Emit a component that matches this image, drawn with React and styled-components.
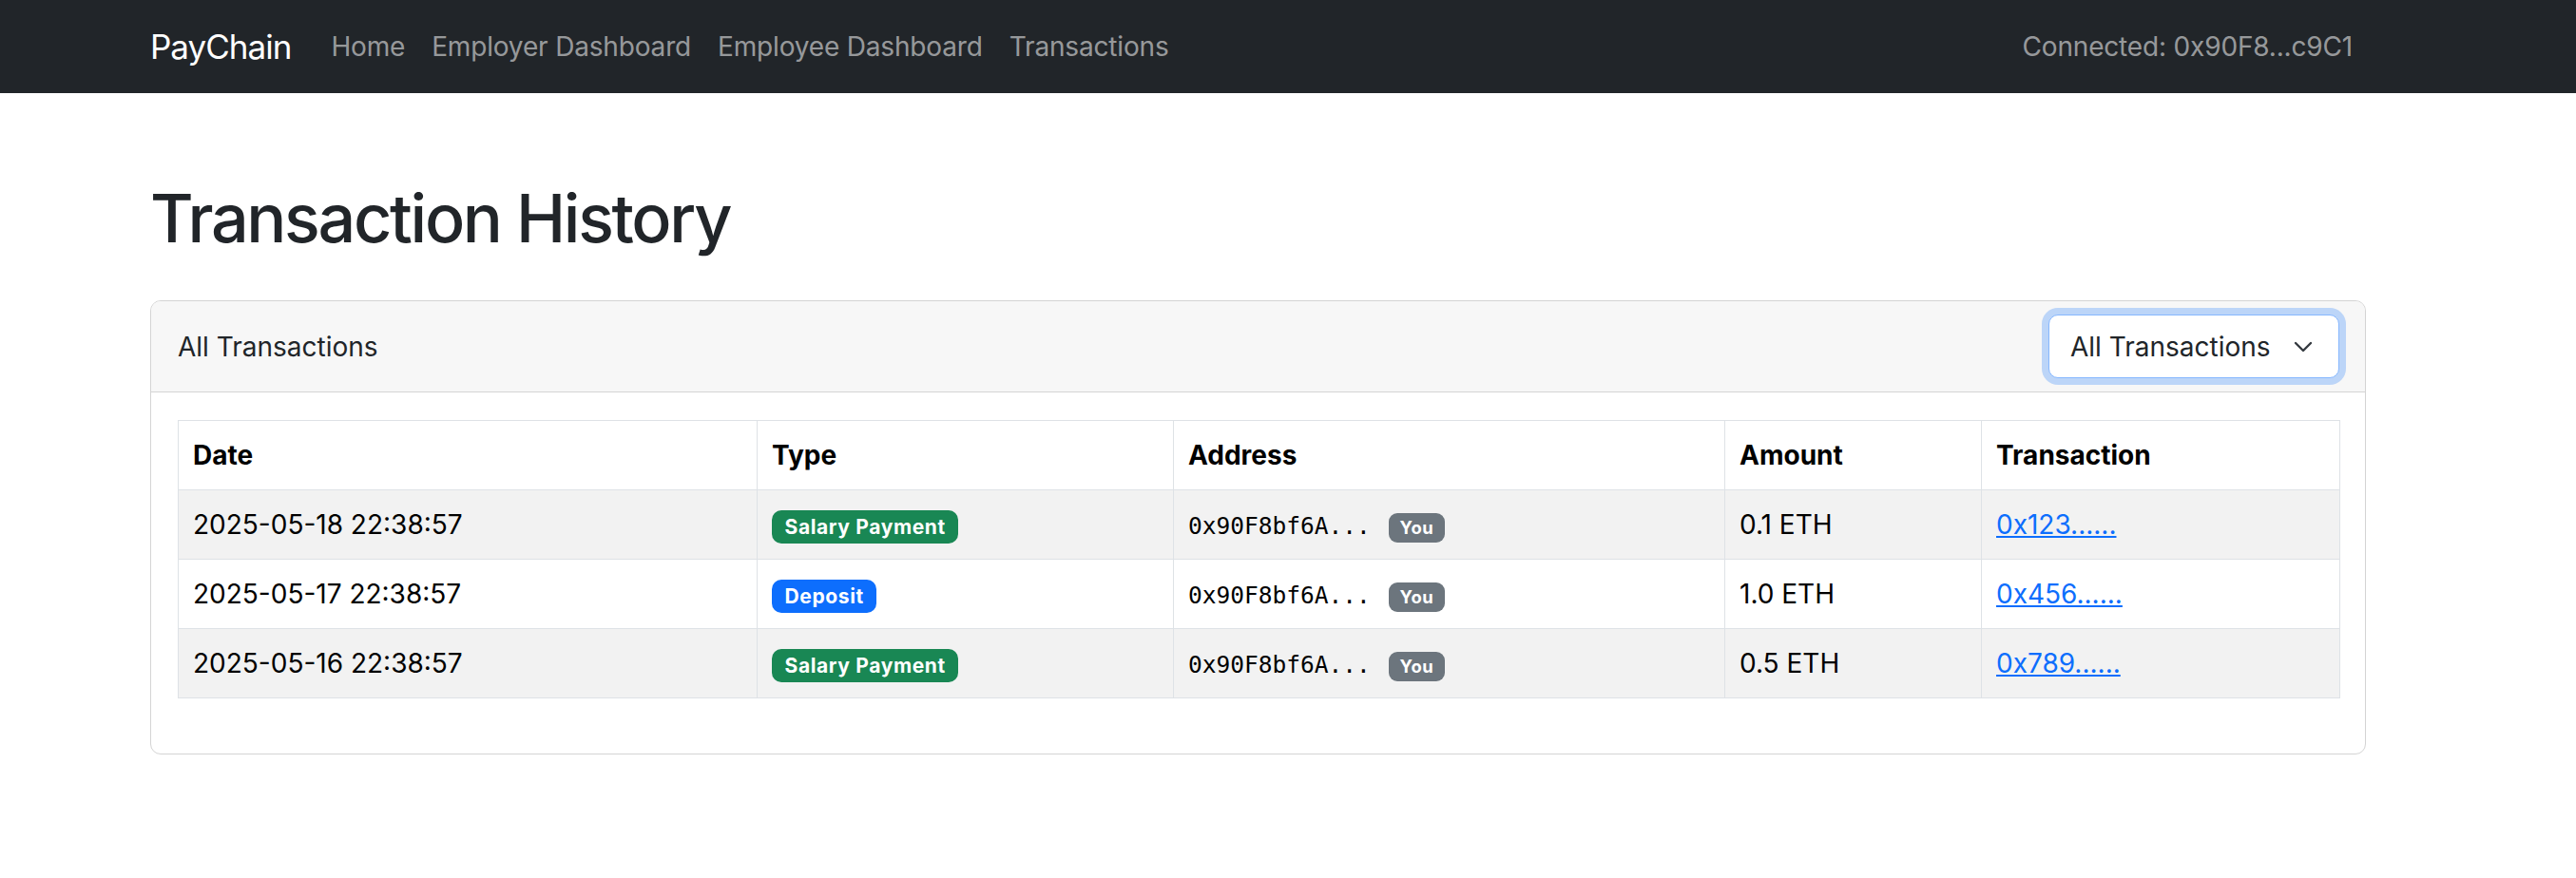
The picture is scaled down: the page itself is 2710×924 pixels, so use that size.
import styled, { createGlobalStyle } from "styled-components";

const GlobalStyle = createGlobalStyle`
  body {
    margin: 0;
    background: #fff;
    font-family: Inter, "Noto Sans", "Liberation Sans", sans-serif;
    font-size: 28px;
    line-height: 1.5;
    color: #212529;
  }
`;

const transactions = [
  { date: "2025-05-18 22:38:57", type: "Salary Payment", address: "0x90F8bf6A...", amount: "0.1 ETH", hash: "0x123......" },
  { date: "2025-05-17 22:38:57", type: "Deposit", address: "0x90F8bf6A...", amount: "1.0 ETH", hash: "0x456......" },
  { date: "2025-05-16 22:38:57", type: "Salary Payment", address: "0x90F8bf6A...", amount: "0.5 ETH", hash: "0x789......" },
];

const columns = [
  { label: "Date", width: 609 },
  { label: "Type", width: 438 },
  { label: "Address", width: 580 },
  { label: "Amount", width: 270 },
  { label: "Transaction", width: 377 },
];

const App = () => {
  return (
    <>
      <GlobalStyle />
      <Navbar>
        <Brand href="#">PayChain</Brand>
        <NavLinks>
          <NavLink href="#">Home</NavLink>
          <NavLink href="#">Employer Dashboard</NavLink>
          <NavLink href="#">Employee Dashboard</NavLink>
          <NavLink href="#">Transactions</NavLink>
        </NavLinks>
        <Connected>Connected: 0x90F8...c9C1</Connected>
      </Navbar>

      <Main>
        <Title>Transaction History</Title>
        <Card>
          <CardHeader>
            <span>All Transactions</span>
            <SelectWrap>
              <Select defaultValue="all">
                <option value="all">All Transactions</option>
                <option value="salary">Salary Payments</option>
                <option value="deposit">Deposits</option>
              </Select>
              <Chevron viewBox="0 0 20 12" width="20" height="12">
                <polyline points="2,2 10,10 18,2" fill="none" stroke="#343a40" strokeWidth="2.4" strokeLinecap="round" strokeLinejoin="round" />
              </Chevron>
            </SelectWrap>
          </CardHeader>
          <CardBody>
            <Table>
              <colgroup>
                {columns.map((c) => (
                  <col key={c.label} style={{ width: c.width }} />
                ))}
              </colgroup>
              <thead>
                <tr>
                  {columns.map((c) => (
                    <Th key={c.label}>{c.label}</Th>
                  ))}
                </tr>
              </thead>
              <tbody>
                {transactions.map((tx, i) => (
                  <Row key={tx.hash} $striped={i % 2 === 0}>
                    <Td>{tx.date}</Td>
                    <Td>
                      <Badge $color={tx.type === "Deposit" ? "#0d6efd" : "#198754"}>{tx.type}</Badge>
                    </Td>
                    <Td>
                      <Mono>
                        {tx.address} <SmallBadge>You</SmallBadge>
                      </Mono>
                    </Td>
                    <Td>{tx.amount}</Td>
                    <Td>
                      <TxLink href="#">{tx.hash}</TxLink>
                    </Td>
                  </Row>
                ))}
              </tbody>
            </Table>
          </CardBody>
        </Card>
      </Main>
    </>
  );
};

const Navbar = styled.nav`
  height: 98px;
  background: #212529;
  display: flex;
  align-items: center;
  padding: 0 221px 0 158px;
  letter-spacing: -0.006em;
`;

const Brand = styled.a`
  color: #fff;
  font-size: 35px;
  text-decoration: none;
  margin-right: 28px;
  line-height: 1.5;
  letter-spacing: -0.028em;
`;

const NavLinks = styled.div`
  display: flex;
  align-items: center;
`;

const NavLink = styled.a`
  color: rgba(255, 255, 255, 0.55);
  text-decoration: none;
  padding: 0 14px;
`;

const Connected = styled.span`
  margin-left: auto;
  padding-right: 14px;
  color: rgba(255, 255, 255, 0.55);
`;

const Main = styled.main`
  padding: 0 221px 0 158px;
`;

const Title = styled.h1`
  margin: 90px 0 44px;
  font-size: 70px;
  font-weight: 500;
  line-height: 1.2;
  letter-spacing: -0.033em;
  color: #212529;
`;

const Card = styled.div`
  border: 1px solid #d4d4d4;
  border-radius: 11px;
  overflow: hidden;
`;

const CardHeader = styled.div`
  display: flex;
  align-items: center;
  justify-content: space-between;
  padding: 14px 27px 14px 28px;
  background: #f7f7f7;
  border-bottom: 1px solid #d4d4d4;
`;

const SelectWrap = styled.div`
  position: relative;
  display: flex;
`;

const Select = styled.select`
  appearance: none;
  width: 306px;
  height: 67px;
  padding: 0 60px 0 22px;
  font-family: inherit;
  font-size: 28px;
  color: #212529;
  background: #fff;
  border: 1px solid #86b7fe;
  border-radius: 10px;
  box-shadow: 0 0 0 7px rgba(13, 110, 253, 0.25);
  outline: none;
`;

const Chevron = styled.svg`
  position: absolute;
  right: 28px;
  top: 28px;
  pointer-events: none;
`;

const CardBody = styled.div`
  padding: 29px 28px 28px;
`;

const Table = styled.table`
  width: 100%;
  table-layout: fixed;
  border-collapse: collapse;
  margin-bottom: 30px;
  color: #000;
`;

const Th = styled.th`
  text-align: left;
  font-weight: 700;
  padding: 15px 15px;
  border: 1px solid #dee2e6;
  background: #fff;
`;

const Row = styled.tr`
  background: ${(p) => (p.$striped ? "#f2f2f2" : "#fff")};
`;

const Td = styled.td`
  padding: 15px 15px;
  border: 1px solid #dee2e6;
  white-space: nowrap;
`;

const Badge = styled.span`
  display: inline-block;
  padding: 7px 13.5px;
  font-size: 21px;
  font-weight: 700;
  line-height: 1;
  letter-spacing: 0.03em;
  color: #fff;
  background: ${(p) => p.$color};
  border-radius: 10px;
  vertical-align: baseline;
`;

const Mono = styled.span`
  font-family: "DejaVu Sans Mono", "Liberation Mono", monospace;
  font-size: 24.5px;
`;

const SmallBadge = styled.span`
  display: inline-block;
  margin-left: 4px;
  padding: 6.5px 12px;
  font-family: Inter, "Noto Sans", sans-serif;
  font-size: 18.4px;
  font-weight: 700;
  line-height: 1;
  letter-spacing: 0.03em;
  color: #fff;
  background: #6c757d;
  border-radius: 9px;
`;

const TxLink = styled.a`
  color: #0d6efd;
  text-decoration: underline;
`;

export default App;
